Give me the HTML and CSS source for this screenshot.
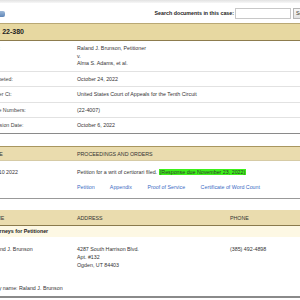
FILE: index.html
```html
<!DOCTYPE html>
<html lang="en">
<head>
    <meta charset="UTF-8">
    <meta name="viewport" content="width=device-width, initial-scale=1.0">
    <title>Docket for 22-380</title>
    <link rel="stylesheet" href="styles.css">
</head>
<body>

    <div class="page">
        <div class="topbar"></div>

        <div class="search-row">
            <span class="go-btn"></span>
            <label class="search-label" for="docSearch">Search documents in this case:</label>
            <input type="text" id="docSearch" class="search-input">
            <button class="search-btn">Search</button>
        </div>

        <div class="docket-title">No. 22-380</div>

        <div class="info">
            <div class="info-row">
                <div class="label">Title:</div>
                <div class="value">Raland J. Brunson, Petitioner<br>v.<br>Alma S. Adams, et al.</div>
            </div>
            <div class="info-row">
                <div class="label">Docketed:</div>
                <div class="value">October 24, 2022</div>
            </div>
            <div class="info-row">
                <div class="label">Lower Ct:</div>
                <div class="value">United States Court of Appeals for the Tenth Circuit</div>
            </div>
            <div class="info-row">
                <div class="label">Case Numbers:</div>
                <div class="value">(22-4007)</div>
            </div>
            <div class="info-row last">
                <div class="label">Decision Date:</div>
                <div class="value">October 6, 2022</div>
            </div>
        </div>

        <div class="proceedings">
            <div class="table-head">
                <div>DATE</div>
                <div>PROCEEDINGS AND ORDERS</div>
            </div>
            <div class="proc-row">
                <div>Oct 10 2022</div>
                <div>
                    Petition for a writ of certiorari filed. <span class="highlight">(Response due November 23, 2022)</span>
                    <div class="links">
                        <a href="#">Petition</a>
                        <a href="#">Appendix</a>
                        <a href="#">Proof of Service</a>
                        <a href="#">Certificate of Word Count</a>
                    </div>
                </div>
            </div>
        </div>

        <div class="parties">
            <div class="table-head three">
                <div>NAME</div>
                <div>ADDRESS</div>
                <div>PHONE</div>
            </div>
            <div class="party-group">Attorneys for Petitioner</div>
            <div class="party-row">
                <div>Raland J. Brunson</div>
                <div>4287 South Harrison Blvd.<br>Apt. #132<br>Ogden, UT 84403</div>
                <div>(385) 492-4898</div>
            </div>
            <div class="party-name">Party name: Raland J. Brunson</div>
        </div>
    </div>

</body>
</html>
```

FILE: styles.css
```css
body {
    margin: 0;
    font-family: "Liberation Sans", Arial, sans-serif;
    font-size: 5.3px;
    color: #333;
    background-color: white;
    overflow: hidden;
}
.page {
    width: 330px;
    margin-left: -11px;
}
.topbar {
    height: 3px;
    background: linear-gradient(#e2e2e2, #f7f7f7);
}
.search-row {
    display: flex;
    align-items: center;
    height: 20px;
}
.go-btn {
    width: 16px;
    height: 6px;
    margin-top: 1px;
    border-radius: 2px;
    background: linear-gradient(#9fb9d8, #5f86b8);
}
.search-label {
    margin-left: auto;
    margin-right: 1px;
    font-weight: bold;
    color: #222;
}
.search-input {
    width: 56px;
    height: 11px;
    box-sizing: border-box;
    border: 1px solid #c8c8c8;
    padding: 0;
    margin: 0 2px 0 0;
}
.search-btn {
    width: 26px;
    height: 11px;
    box-sizing: border-box;
    padding: 0 2px;
    margin: 0;
    text-align: left;
    font-family: inherit;
    font-size: 5.3px;
    color: #333;
    border: 1px solid #b5b5b5;
    background: linear-gradient(#f8f8f8, #e2e2e2);
}
.docket-title {
    background-color: #e7d8a1;
    border-top: 1px solid #b9a875;
    border-bottom: 1px solid #8d7c4e;
    height: 16px;
    line-height: 16px;
    font-size: 7px;
    font-weight: bold;
    color: #222;
}
.info-row {
    display: grid;
    grid-template-columns: 88px 1fr;
    padding: 4px 0 3px;
    line-height: 7.5px;
    border-bottom: 1px solid #e2e2e2;
}
.info-row.last {
    border-bottom: 1px solid #8a8a8a;
}
.label {
    color: #444;
}
.proceedings {
    margin-top: 12px;
    border-bottom: 1px solid #999;
}
.table-head {
    display: grid;
    grid-template-columns: 88px 1fr;
    background-color: #eadcae;
    border-top: 1px solid #a8965f;
    border-bottom: 1px solid #d6cba6;
    padding: 4px 0 3px;
    line-height: 6px;
    color: #333;
}
.table-head.three {
    grid-template-columns: 88px 153px 1fr;
    border-top: none;
    border-bottom: 1px solid #8a7a4c;
    padding: 5px 0 4px;
}
.proc-row {
    display: grid;
    grid-template-columns: 88px 1fr;
    padding: 7px 0 7px;
    line-height: 8px;
}
.highlight {
    background-color: #3ef01a;
    padding: 0 1px;
}
.links {
    margin-top: 7px;
}
.links a {
    color: #3b6bc4;
    text-decoration: none;
    margin-right: 14px;
}
.parties {
    margin-top: 11px;
    border-bottom: 2px solid #8a8a8a;
}
.party-group {
    background-color: #fdf8e4;
    font-weight: bold;
    color: #222;
    padding: 2px 0;
    line-height: 7px;
}
.party-row {
    display: grid;
    grid-template-columns: 88px 153px 1fr;
    padding: 8px 0 0;
    line-height: 8px;
}
.party-name {
    margin-top: 15px;
    padding-bottom: 4px;
    line-height: 8px;
}
```
